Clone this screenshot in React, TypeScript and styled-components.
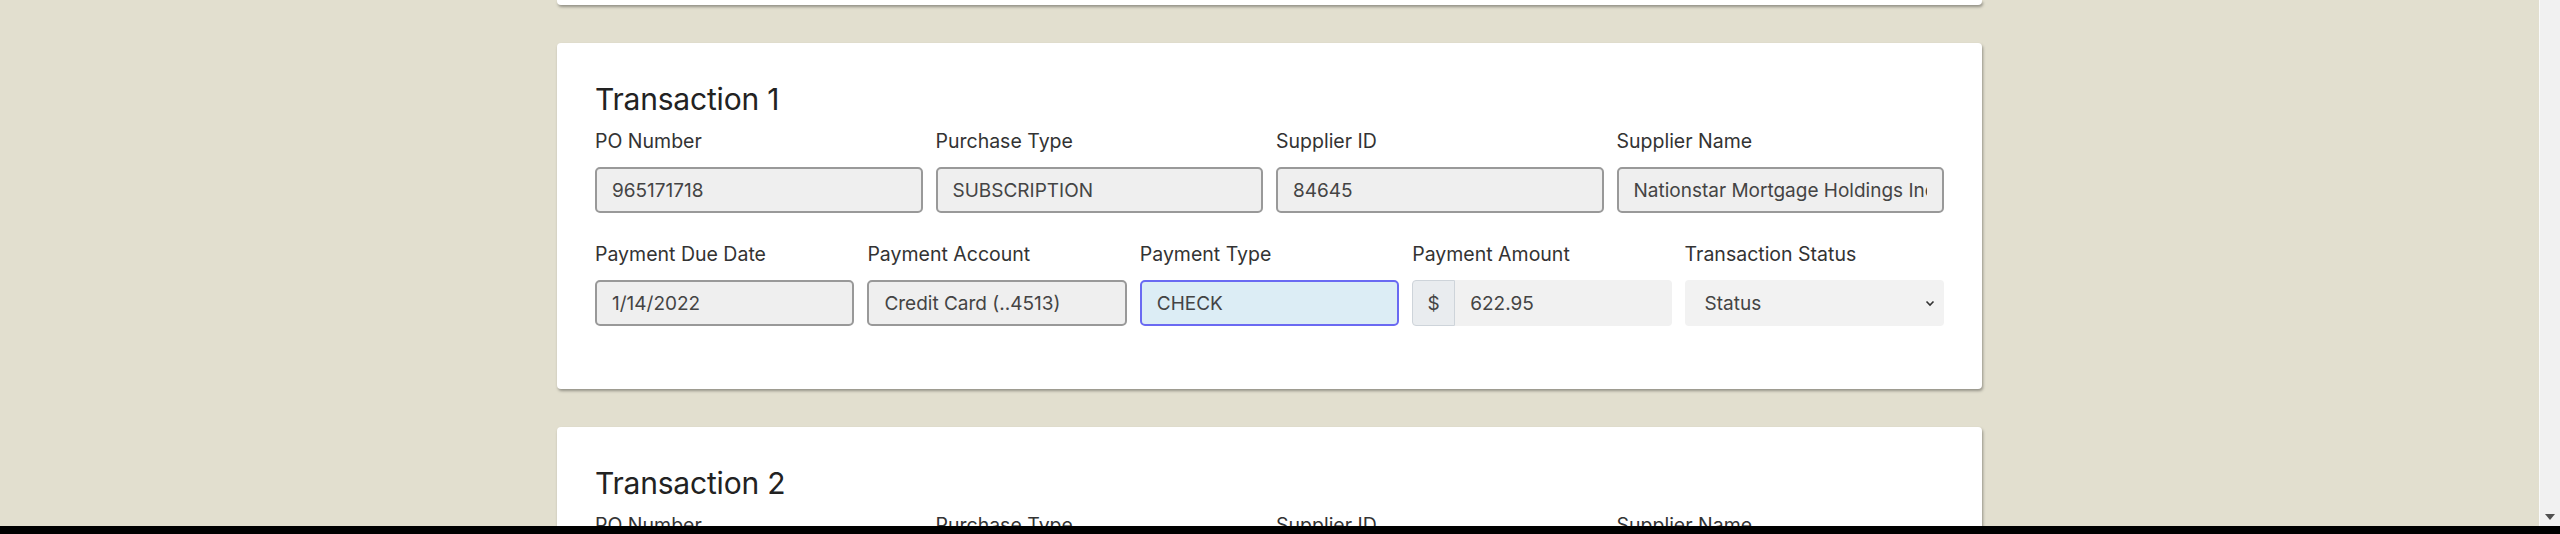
import React from "react";
import styled, { createGlobalStyle } from "styled-components";

const GlobalStyle = createGlobalStyle`
  *, *::before, *::after {
    box-sizing: border-box;
  }

  html, body {
    margin: 0;
    padding: 0;
    overflow: hidden;
    background: #000;
    font-family: Inter, Lato, sans-serif;
  }
`;

const Frame = styled.div`
  display: flex;
  flex-direction: column;
  width: 2560px;
  height: 534px;
`;

const Viewport = styled.div`
  display: flex;
  height: 526px;
`;

const Main = styled.main`
  flex: 1;
  background: #e2dfcf;
  overflow: hidden;
`;

const ScrollRail = styled.div`
  width: 21px;
  background: #f1f1f1;
  border-left: 1px solid #fafafa;
  display: flex;
  flex-direction: column;
  justify-content: flex-end;
  align-items: center;
  padding-bottom: 6px;
`;

const BottomBar = styled.div`
  height: 8px;
  background: #000;
`;

const Container = styled.div`
  width: 1425px;
  margin: 0 auto;
`;

const PrevCard = styled.div`
  height: 5px;
  background: #fff;
  border-radius: 0 0 4px 4px;
  box-shadow: 1px 2px 3px rgba(0, 0, 0, 0.35);
`;

const Card = styled.section`
  margin-top: 38px;
  background: #fff;
  border-radius: 4px;
  box-shadow: 1px 2px 3px rgba(0, 0, 0, 0.35);
  padding: 38px 38px 63px;
`;

const Title = styled.h2`
  margin: 0 0 13px;
  font-size: 30px;
  line-height: 36px;
  font-weight: 400;
  letter-spacing: -0.2px;
  color: #222;
`;

const Rows = styled.div`
  display: flex;
  flex-direction: column;
  gap: 30px;
`;

const Row = styled.div<{ $cols: number }>`
  display: grid;
  grid-template-columns: repeat(${(p) => p.$cols}, 1fr);
  column-gap: 13px;
`;

const Field = styled.div`
  display: flex;
  flex-direction: column;
  min-width: 0;
`;

const Label = styled.label`
  font-size: 19.5px;
  line-height: 23px;
  color: #333;
  margin-bottom: 14px;
`;

const TextInput = styled.input<{ $active?: boolean }>`
  width: 100%;
  height: 46px;
  padding: 0 15px;
  font-family: inherit;
  font-size: 19px;
  color: #444;
  background: ${(p) => (p.$active ? "#dcedf5" : "#efefef")};
  border: 2px solid ${(p) => (p.$active ? "#6a6af2" : "#999")};
  border-radius: 5px;
  outline: none;
`;

const InputGroup = styled.div`
  display: flex;
  height: 46px;
`;

const Addon = styled.span`
  width: 43px;
  display: flex;
  align-items: center;
  justify-content: center;
  background: #e9ecef;
  border: 1px solid #ced4da;
  border-radius: 4px 0 0 4px;
  font-size: 19px;
  color: #444;
`;

const AmountInput = styled.input`
  flex: 1;
  min-width: 0;
  padding: 0 15px;
  font-family: inherit;
  font-size: 19px;
  color: #444;
  background: #f1f1f1;
  border: none;
  border-radius: 0 4px 4px 0;
  outline: none;
`;

const SelectWrap = styled.div`
  position: relative;
  height: 46px;
`;

const Select = styled.select`
  appearance: none;
  width: 100%;
  height: 100%;
  padding: 0 36px 0 20px;
  font-family: inherit;
  font-size: 19px;
  color: #444;
  background: #f2f2f2;
  border: none;
  border-radius: 4px;
  outline: none;
`;

const Chevron = styled.svg`
  position: absolute;
  right: 8px;
  top: 19px;
  pointer-events: none;
`;

type Txn = {
  id: number;
  po: string;
  purchaseType: string;
  supplierId: string;
  supplierName: string;
  dueDate: string;
  account: string;
  paymentType: string;
  amount: string;
};

const transactions: Txn[] = [
  {
    id: 1,
    po: "965171718",
    purchaseType: "SUBSCRIPTION",
    supplierId: "84645",
    supplierName: "Nationstar Mortgage Holdings Inc.",
    dueDate: "1/14/2022",
    account: "Credit Card (..4513)",
    paymentType: "CHECK",
    amount: "622.95",
  },
  {
    id: 2,
    po: "",
    purchaseType: "",
    supplierId: "",
    supplierName: "",
    dueDate: "",
    account: "",
    paymentType: "",
    amount: "",
  },
];

const TransactionCard: React.FC<{ t: Txn; active?: boolean }> = ({ t, active }) => (
  <Card>
    <Title>Transaction {t.id}</Title>
    <Rows>
      <Row $cols={4}>
        <Field>
          <Label>PO Number</Label>
          <TextInput readOnly defaultValue={t.po} />
        </Field>
        <Field>
          <Label>Purchase Type</Label>
          <TextInput readOnly defaultValue={t.purchaseType} />
        </Field>
        <Field>
          <Label>Supplier ID</Label>
          <TextInput readOnly defaultValue={t.supplierId} />
        </Field>
        <Field>
          <Label>Supplier Name</Label>
          <TextInput readOnly defaultValue={t.supplierName} />
        </Field>
      </Row>
      <Row $cols={5}>
        <Field>
          <Label>Payment Due Date</Label>
          <TextInput readOnly defaultValue={t.dueDate} />
        </Field>
        <Field>
          <Label>Payment Account</Label>
          <TextInput readOnly defaultValue={t.account} />
        </Field>
        <Field>
          <Label>Payment Type</Label>
          <TextInput readOnly defaultValue={t.paymentType} $active={active} />
        </Field>
        <Field>
          <Label>Payment Amount</Label>
          <InputGroup>
            <Addon>$</Addon>
            <AmountInput readOnly defaultValue={t.amount} />
          </InputGroup>
        </Field>
        <Field>
          <Label>Transaction Status</Label>
          <SelectWrap>
            <Select defaultValue="">
              <option value="">Status</option>
              <option value="approved">Approved</option>
              <option value="pending">Pending</option>
            </Select>
            <Chevron width="12" height="8" viewBox="0 0 12 8">
              <path d="M2.5 2.5 L6 6 L9.5 2.5" fill="none" stroke="#333" strokeWidth="1.6" />
            </Chevron>
          </SelectWrap>
        </Field>
      </Row>
    </Rows>
  </Card>
);

const App: React.FC = () => {
  return (
    <>
      <GlobalStyle />
      <Frame>
        <Viewport>
          <Main>
            <Container>
              <PrevCard />
              {transactions.map((t, i) => (
                <TransactionCard key={t.id} t={t} active={i === 0} />
              ))}
            </Container>
          </Main>
          <ScrollRail>
            <svg width="10" height="6" viewBox="0 0 10 6">
              <path d="M0 0 H10 L5 6 Z" fill="#505050" />
            </svg>
          </ScrollRail>
        </Viewport>
        <BottomBar />
      </Frame>
    </>
  );
};

export default App;
